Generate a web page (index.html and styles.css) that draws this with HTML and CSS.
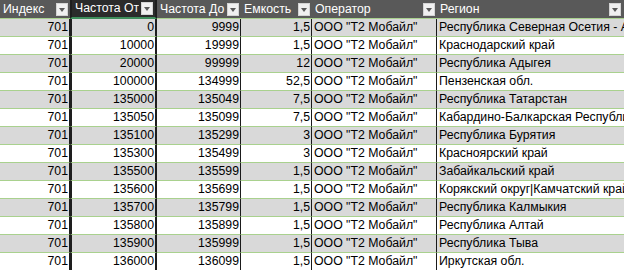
FILE: index.html
```html
<!DOCTYPE html>
<html lang="ru">
<head>
<meta charset="utf-8">
<title>Таблица</title>
<link rel="stylesheet" href="styles.css">
</head>
<body>
<table class="sheet">
  <colgroup>
    <col class="c1"><col class="c2"><col class="c3"><col class="c4"><col class="c5"><col class="c6">
  </colgroup>
  <thead>
    <tr>
      <th><div class="hd"><span class="ht">Индекс</span><span class="fb"></span></div></th>
      <th class="sel"><div class="hd"><span class="ht">Частота От</span><span class="fb"></span></div></th>
      <th><div class="hd"><span class="ht">Частота До</span><span class="fb"></span></div></th>
      <th><div class="hd"><span class="ht">Емкость</span><span class="fb"></span></div></th>
      <th><div class="hd"><span class="ht">Оператор</span><span class="fb"></span></div></th>
      <th class="last"><div class="hd"><span class="ht">Регион</span><span class="fb"></span></div></th>
    </tr>
  </thead>
  <tbody>
    <tr><td class="n">701</td><td class="n sel">0</td><td class="n">9999</td><td class="n">1,5</td><td>ООО "Т2 Мобайл"</td><td class="last">Республика Северная Осетия - Алания</td></tr>
    <tr><td class="n">701</td><td class="n sel">10000</td><td class="n">19999</td><td class="n">1,5</td><td>ООО "Т2 Мобайл"</td><td class="last">Краснодарский край</td></tr>
    <tr><td class="n">701</td><td class="n sel">20000</td><td class="n">99999</td><td class="n">12</td><td>ООО "Т2 Мобайл"</td><td class="last">Республика Адыгея</td></tr>
    <tr><td class="n">701</td><td class="n sel">100000</td><td class="n">134999</td><td class="n">52,5</td><td>ООО "Т2 Мобайл"</td><td class="last">Пензенская обл.</td></tr>
    <tr><td class="n">701</td><td class="n sel">135000</td><td class="n">135049</td><td class="n">7,5</td><td>ООО "Т2 Мобайл"</td><td class="last">Республика Татарстан</td></tr>
    <tr><td class="n">701</td><td class="n sel">135050</td><td class="n">135099</td><td class="n">7,5</td><td>ООО "Т2 Мобайл"</td><td class="last">Кабардино-Балкарская Республика</td></tr>
    <tr><td class="n">701</td><td class="n sel">135100</td><td class="n">135299</td><td class="n">3</td><td>ООО "Т2 Мобайл"</td><td class="last">Республика Бурятия</td></tr>
    <tr><td class="n">701</td><td class="n sel">135300</td><td class="n">135499</td><td class="n">3</td><td>ООО "Т2 Мобайл"</td><td class="last">Красноярский край</td></tr>
    <tr><td class="n">701</td><td class="n sel">135500</td><td class="n">135599</td><td class="n">1,5</td><td>ООО "Т2 Мобайл"</td><td class="last">Забайкальский край</td></tr>
    <tr><td class="n">701</td><td class="n sel">135600</td><td class="n">135699</td><td class="n">1,5</td><td>ООО "Т2 Мобайл"</td><td class="last">Корякский округ|Камчатский край</td></tr>
    <tr><td class="n">701</td><td class="n sel">135700</td><td class="n">135799</td><td class="n">1,5</td><td>ООО "Т2 Мобайл"</td><td class="last">Республика Калмыкия</td></tr>
    <tr><td class="n">701</td><td class="n sel">135800</td><td class="n">135899</td><td class="n">1,5</td><td>ООО "Т2 Мобайл"</td><td class="last">Республика Алтай</td></tr>
    <tr><td class="n">701</td><td class="n sel">135900</td><td class="n">135999</td><td class="n">1,5</td><td>ООО "Т2 Мобайл"</td><td class="last">Республика Тыва</td></tr>
    <tr><td class="n">701</td><td class="n sel">136000</td><td class="n">136099</td><td class="n">1,5</td><td>ООО "Т2 Мобайл"</td><td class="last">Иркутская обл.</td></tr>
  </tbody>
</table>
</body>
</html>
```

FILE: styles.css
```css
html, body {
  margin: 0;
  padding: 0;
  background: #ffffff;
  overflow: hidden;
  width: 624px;
  height: 270px;
}

.sheet {
  table-layout: fixed;
  border-collapse: separate;
  border-spacing: 0;
  width: 624px;
  font-family: "Liberation Sans", Arial, sans-serif;
  font-size: 12.3px;
  color: #000;
}

.c1 { width: 70px; }
.c2 { width: 87px; }
.c3 { width: 84px; }
.c4 { width: 71px; }
.c5 { width: 125px; }
.c6 { width: 187px; }

.sheet th,
.sheet td {
  box-sizing: border-box;
  height: 18px;
  padding: 0 2px 0 2px;
  white-space: nowrap;
  overflow: hidden;
  line-height: 17px;
  vertical-align: middle;
}

.sheet th {
  background: #595959;
  color: #ffffff;
  font-weight: normal;
  text-align: left;
  padding: 0 2px 0 3px;
  border-bottom: 1px solid #a9d18e;
}

.sheet th.last {
  padding-right: 3px;
}

.sheet th.sel {
  background: #2b2b2b;
  border-bottom: 2px solid #3f8f5c;
  border-left: 2px solid #1e1e1e;
  border-right: 2px solid #1e1e1e;
}

.hd {
  display: flex;
  align-items: center;
  height: 17px;
}

.ht {
  flex: 1;
  overflow: hidden;
}

.fb {
  flex: none;
  width: 12px;
  height: 13px;
  margin-left: 2px;
  background: #f0f0f0;
  border: 1px solid #d4d4d4;
  box-sizing: border-box;
  display: flex;
  align-items: center;
  justify-content: center;
}

.fb::after {
  content: "";
  width: 0;
  height: 0;
  border-left: 3.5px solid transparent;
  border-right: 3.5px solid transparent;
  border-top: 4px solid #595959;
  margin-top: 1px;
}

.sheet td {
  border-right: 1px solid #1a1a1a;
  border-bottom: 1px solid #a9d18e;
}

.sheet td.last {
  border-right: none;
  overflow: visible;
}

.sheet td.sel {
  border-left: 2px solid #1e1e1e;
  border-right: 2px solid #1e1e1e;
}

.sheet td.n {
  text-align: right;
  padding-right: 1px;
}

.sheet tbody tr:nth-child(odd) td { background: #d9d9d9; }
.sheet tbody tr:nth-child(even) td { background: #ffffff; }
```
